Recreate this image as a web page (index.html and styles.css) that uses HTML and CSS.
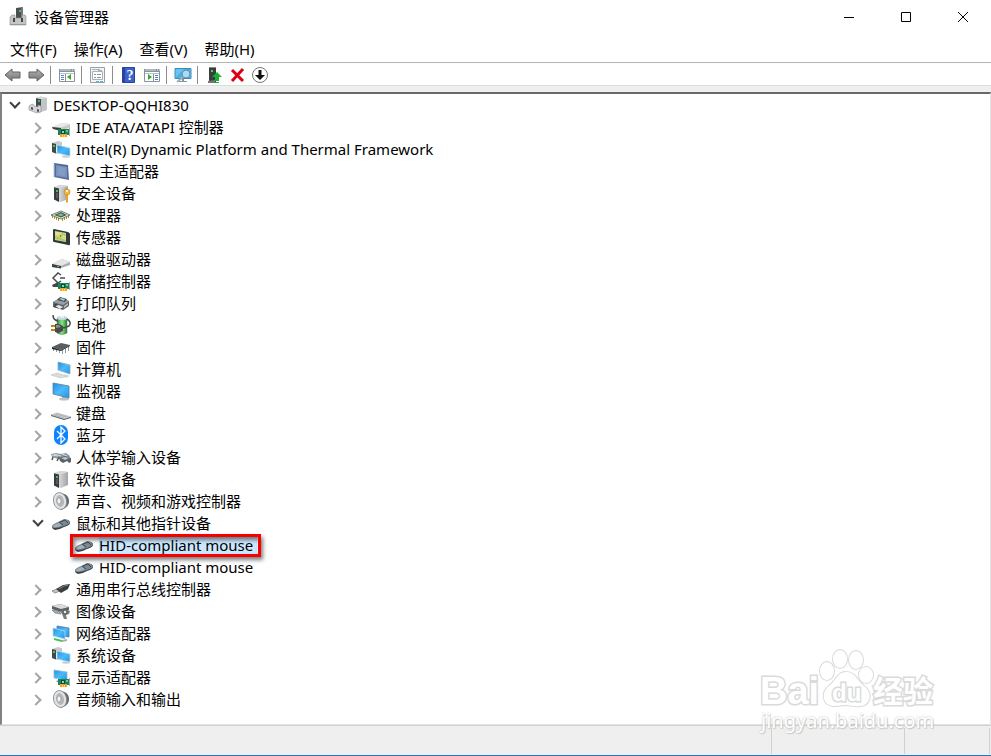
FILE: index.html
```
<!DOCTYPE html>
<html lang="zh-CN">
<head>
  <meta charset="UTF-8">
  <meta name="viewport" content="width=device-width, initial-scale=1">
  <title>设备管理器</title>
  <link rel="stylesheet" href="styles.css">
</head>
<body>

  <!-- icon set -->
  <svg class="sprite" aria-hidden="true">
    <defs>
      <linearGradient id="screen" x1="0" y1="0" x2="1" y2="1">
        <stop offset="0" stop-color="#1e90e6"/><stop offset=".5" stop-color="#4cbafa"/><stop offset="1" stop-color="#2196ec"/>
      </linearGradient>
      <linearGradient id="metal" x1="0" y1="0" x2="1" y2="0">
        <stop offset="0" stop-color="#f4f4f4"/><stop offset="1" stop-color="#a2a4a6"/>
      </linearGradient>
      <linearGradient id="arrow" x1="0" y1="0" x2="0" y2="1">
        <stop offset="0" stop-color="#b4b4b4"/><stop offset="1" stop-color="#747474"/>
      </linearGradient>
      <linearGradient id="green" x1="0" y1="0" x2="1" y2="0">
        <stop offset="0" stop-color="#2c8c3a"/><stop offset=".5" stop-color="#8be58c"/><stop offset="1" stop-color="#1f7f2e"/>
      </linearGradient>
    </defs>

    <symbol id="i-app" viewBox="0 0 18 20">
      <path d="M7 1l7-1v12H7z" fill="#4b4f52"/>
      <path d="M12 0l2 0v12h-2z" fill="#777"/>
      <path d="M10 3h2v2h-2z" fill="#3fcb4e"/>
      <path d="M1 10l2-2h3v3h7V8h3l1 2v8H1z" fill="#c3c5c7" stroke="#8d9092" stroke-width=".6"/>
      <path d="M4 11h2v4H4zM12 11h2v4h-2z" fill="#44484b"/>
      <path d="M1 17h16v1H1z" fill="#999"/>
    </symbol>
    <symbol id="i-root" viewBox="0 0 20 20">
      <path d="M8 3l5-1.500L19 3v12l-6 2-5-2z" fill="#c2c5c7"/>
      <path d="M8 3l5 1v13l-5-2z" fill="#45494c"/>
      <path d="M8 3l5-1.500L19 3l-6 1z" fill="#dcdcdc"/>
      <path d="M10 5h2v2h-2z" fill="#38c348"/>
      <path d="M1 11l3-2 2 1v1l4 1V10l3 1v6l-4 1-8-3z" fill="#d3d5d7" stroke="#898c8e" stroke-width=".6"/>
      <path d="M3 12l2 .500V15l-2-.500zM9 14l2 .500V17l-2-.500z" fill="#505356"/>
    </symbol>
    <symbol id="i-card" viewBox="0 0 20 20">
      <path d="M7 12h11v6H7z" fill="#18845a"/>
      <path d="M10 13h4v4h-4z" fill="#0b4e36"/><path d="M11 14h2v2h-2z" fill="#8fd0ac"/>
      <path d="M15 13h2v2h-2z" fill="#6cc396"/>
      <path d="M9 17h7v3H9z" fill="#f0a31c"/><path d="M11.500 18v2M13.500 18v2" stroke="#fff" stroke-width=".5"/>
      <path d="M18 11h1v8h-1z" fill="#a7abad"/>
    </symbol>
    <symbol id="i-ide" viewBox="0 0 20 20">
      <path d="M1 10l10-4 8 1v4l-9 2z" fill="#c8cacb"/>
      <path d="M1 10l10-4 8 1-9 3.500z" fill="#e9e9e9"/>
      <path d="M1 10l9 1v3L2 12z" fill="#3c4042"/>
      <use href="#i-card" width="20" height="20"/>
    </symbol>
    <symbol id="i-system" viewBox="0 0 20 20">
      <path d="M1 4l6-2 4 1v10l-5 2-5-2z" fill="#c8cacc"/>
      <path d="M1 4l4 1v9.500L1 13z" fill="#44484b"/><path d="M2 6h2v2H2z" fill="#42c94e"/>
      <path d="M5 8h1v5H5z" fill="#fff"/>
      <path d="M6 6l13 3v8L6 14z" fill="url(#screen)" stroke="#bed8e8" stroke-width=".8"/>
      <ellipse cx="15" cy="17.500" rx="4" ry="1.200" fill="#c7cdd1"/>
    </symbol>
    <symbol id="i-sd" viewBox="0 0 20 20">
      <path d="M3 2l14 2 1 15-15-3z" fill="#526c98"/>
      <path d="M5 4l11 2v11L5 15z" fill="#7892bb"/>
      <path d="M7 6l7 1v8l-7-1z" fill="#829cc4"/>
      <path d="M3 3v13" stroke="#b8c7dd"/>
    </symbol>
    <symbol id="i-tower" viewBox="0 0 20 20">
      <path d="M3 4l6-2 8 1v13l-7 3-7-3z" fill="url(#metal)"/>
      <path d="M3 4l5 1.500V19l-5-2.500z" fill="#393c3e"/>
      <path d="M3 4l6-2 8 1-8 2.500z" fill="#d7d8d9"/>
      <path d="M5 7h2v2H5z" fill="#3fc451"/><path d="M5 10h2v5H5z" fill="#555a5d"/>
    </symbol>
    <symbol id="i-security" viewBox="0 0 20 20">
      <use href="#i-tower" width="20" height="20"/>
      <path d="M15 11h2v8l-1 1-1-1z" fill="#e5a52c"/>
      <circle cx="16" cy="9" r="3" fill="#f2b948" stroke="#c98618" stroke-width=".7"/>
      <circle cx="16" cy="8" r="1" fill="#fff"/>
    </symbol>
    <symbol id="i-cpu" viewBox="0 0 20 20">
      <path d="M1.500 10v3M3.500 11v3M5.500 12v3M7.500 13v3M11.500 13v3M13.500 12v3M15.500 11v3M17.500 10v3" stroke="#c58b1e"/>
      <path d="M0 10l10-4 9 4-9 4z" fill="#eef2ee" stroke="#4e5f52" stroke-width=".8"/>
      <path d="M3 10l7-3 6 3-6 2.500z" fill="#35684b"/>
      <path d="M6 10l4-1.500 3 1.500-3 1z" fill="#9cb8a4"/>
    </symbol>
    <symbol id="i-sensor" viewBox="0 0 20 20">
      <path d="M2 3q0-1 1-1l14 3q2 1 2 2v10q0 2-2 1L3 15q-1 0-1-1z" fill="#34383a"/>
      <path d="M4 4l11 2v9L4 13z" fill="#d5e69a"/>
      <path d="M4 9l4 1 3-4 4 1v2l-3-1-2 3 5 2v2L4 12z" fill="#9fce78"/>
      <path d="M4 8l11 3M9 5l-1 8" stroke="#f0c84c"/><path d="M9 8h1v2H9z" fill="#e25c35"/>
    </symbol>
    <symbol id="i-disk" viewBox="0 0 20 20">
      <path d="M1 15l10-5 8 3v3l-9 3-9-1z" fill="#aaadaf"/>
      <path d="M1 15l10-5 8 3-9 4z" fill="#e6e6e7"/>
      <path d="M1 15l9 2v2.500L1 18z" fill="#3b4042"/><path d="M6 17h2v1H6z" fill="#3bdb51"/>
    </symbol>
    <symbol id="i-storage" viewBox="0 0 20 20">
      <path d="M10 4L7 2 2 7l5 5 3-2M9 7h5" fill="none" stroke="#484d50" stroke-width="1.500"/>
      <path d="M1 14l6-3 3 3-2 2-6 0z" fill="#42484b"/>
      <use href="#i-card" width="20" height="20"/>
    </symbol>
    <symbol id="i-printer" viewBox="0 0 20 20">
      <path d="M2 9l7-4 9 3v5l-6 4-10-3z" fill="#606669"/>
      <path d="M2 9l7-4 9 3-6 4z" fill="#999fa2"/>
      <path d="M6 7l3-3 7 2-2 3z" fill="#44494d"/><path d="M8 6l2-1 4 1-1 2z" fill="#9fc8dd"/>
      <path d="M4 11l7 2v3l-8-2z" fill="#303436"/><path d="M4 13l4-1 4 2-3 2z" fill="#e3e5e6"/>
      <path d="M13 13l4-3v2l-4 3z" fill="#b8bcbe"/>
    </symbol>
    <symbol id="i-battery" viewBox="0 0 20 20">
      <path d="M6 3q5-3 10 0v15q-5 3-10 0z" fill="url(#green)" stroke="#507151" stroke-width=".5"/>
      <ellipse cx="11" cy="3" rx="5" ry="2" fill="#c5d6df"/><path d="M9 1h4v2H9z" fill="#e8edef"/>
      <path d="M2 0q0 5 5 6M16 4q5 3 2 7-4 2-7 2" fill="none" stroke="#454b4e" stroke-width="1.500"/>
      <path d="M0 10h5v2H0zM0 14h5v2H0z" fill="#bb8412"/>
      <path d="M4 9h4l4 2v5l-5 2-3-1z" fill="#484a4b"/><path d="M5 10h3l2 2-5 1z" fill="#8c8f91"/>
    </symbol>
    <symbol id="i-firmware" viewBox="0 0 20 20">
      <path d="M2.500 12v2M5.500 13v2M8.500 13v3M11.500 12v5M14.500 11v5M17.500 9v5" stroke="#93999c"/>
      <path d="M1 10l9-4 9 2-9 5z" fill="#5a5e60"/>
      <path d="M1 10l9 3v1l-9-2zM10 13l9-5v1l-9 5z" fill="#25282a"/>
    </symbol>
    <symbol id="i-computer" viewBox="0 0 20 20">
      <path d="M7 3l12 3v9L7 11z" fill="url(#screen)" stroke="#8fa9b8" stroke-width=".8"/>
      <ellipse cx="14" cy="17" rx="4" ry="1.500" fill="#d0d6d9"/>
      <path d="M0 16l6-2 9 3-5 2z" fill="#e4e7e9" stroke="#b9bec1" stroke-width=".6"/>
      <path d="M3 16l7 2M5 15l7 2" stroke="#c5cacd" stroke-width=".6"/>
    </symbol>
    <symbol id="i-monitor" viewBox="0 0 20 20">
      <path d="M11 14l4 1v3h-4z" fill="#9ca3a7"/><ellipse cx="13" cy="18" rx="5" ry="1.500" fill="#bcc2c6"/>
      <path d="M2 2l16 3v12L2 13z" fill="url(#screen)" stroke="#5c7f94" stroke-width=".8"/>
    </symbol>
    <symbol id="i-keyboard" viewBox="0 0 20 20">
      <path d="M0 12l6-2 14 4-7 2z" fill="#d2d5d7" stroke="#a3a8ab" stroke-width=".6"/>
      <path d="M0 12l13 4 7-2v1l-7 2L0 13z" fill="#5c6265"/>
      <path d="M3 12l10 3M5 11l11 3" stroke="#9ba1a5" stroke-width=".7"/>
    </symbol>
    <symbol id="i-bluetooth" viewBox="0 0 20 20">
      <rect x="3" y="0" width="14" height="20" rx="7" fill="#0a84ff"/>
      <path d="M6 6l8 8-4 4V2l4 4-8 8" fill="none" stroke="#fff" stroke-width="1.300"/>
    </symbol>
    <symbol id="i-hid" viewBox="0 0 20 20">
      <path d="M0 7l5-1 5 1 5-1 4 3-1 2-5-1-6 2-6-2z" fill="#8d979b"/>
      <path d="M1 8l6 1M3 7l7 2M11 7l5 2" stroke="#d6dcdf"/>
      <path d="M2 10l-1 3M8 10l-2 4" stroke="#525b60" stroke-width="1.500"/>
      <path d="M8 11l6-2 6 2v4l-2 1-2-2-4 2-3-2z" fill="#59636a"/>
      <path d="M10 11l4-1 4 1-4 2z" fill="#bdc7cc"/>
    </symbol>
    <symbol id="i-speaker" viewBox="0 0 20 20">
      <path d="M8 2q9 0 10 7t-8 10" fill="#66696b"/>
      <ellipse cx="9" cy="10" rx="6.500" ry="8.500" transform="rotate(-12 9 10)" fill="#e3e4e5" stroke="#85898b" stroke-width=".8"/>
      <ellipse cx="9" cy="10" rx="4" ry="6" transform="rotate(-12 9 10)" fill="#b6b9bb"/>
      <ellipse cx="8" cy="10" rx="2" ry="3" fill="#f4f4f4" stroke="#84888a" stroke-width=".6"/>
    </symbol>
    <symbol id="i-mouse" viewBox="0 0 20 20">
      <path d="M1 14q0-2 6-4l6-3q5-1 6 2 1 3-6 5-5 3-9 3-3-1-3-3z" fill="#39444c"/>
      <path d="M1 13q1-2 6-4l6-3q4 0 6 3 0 2-6 4-5 2-9 2-3 0-3-2z" fill="#7b8892"/>
      <path d="M2 13q2-2 6-3l3 2q-4 3-8 2z" fill="#a3b0b9"/>
      <path d="M8 9l4 3M9 9l5-2 3 3" stroke="#2c363e" stroke-width=".8" fill="none"/>
    </symbol>
    <symbol id="i-usb" viewBox="0 0 20 20">
      <path d="M1 12l5-2 3 2-5 2z" fill="#c4c8ca" stroke="#6f7476" stroke-width=".7"/>
      <path d="M5 10l7-4 7-1-2 5-7 4z" fill="#3b3d3f"/><path d="M8 10l5-3 4-1" stroke="#828688" fill="none"/>
    </symbol>
    <symbol id="i-imaging" viewBox="0 0 20 20">
      <path d="M1 5l8-2 9 3v3l-8 2-9-3z" fill="#5c6062"/>
      <path d="M1 5l8-2 9 3-8 2z" fill="#d8dadb"/>
      <path d="M1 9l7 1 2 3-6-1z" fill="#a9adaf" stroke="#64696b" stroke-width=".6"/>
      <path d="M9 10l5-2 5 2-1 3-3 1 1 4h-3l-2-5z" fill="#777c7f"/><circle cx="14" cy="11" r="2" fill="#eceded" stroke="#3f4446"/>
    </symbol>
    <symbol id="i-network" viewBox="0 0 20 20">
      <path d="M6 3l12 2v9l-12-2z" fill="url(#screen)" stroke="#4c7c98" stroke-width=".8"/>
      <path d="M2 5l12 3v8L2 13z" fill="url(#screen)" stroke="#b9d8ea" stroke-width=".8"/>
      <path d="M3 15l8 2v2l-8-2z" fill="#41c64a"/><path d="M11 17l5-1v2l-5 1z" fill="#a9afb1"/>
    </symbol>
    <symbol id="i-display" viewBox="0 0 20 20">
      <path d="M3 3l13 2v8L3 11z" fill="url(#screen)" stroke="#93b7cb" stroke-width=".8"/>
      <path d="M5 14l4-1v3z" fill="#62686b"/>
      <use href="#i-card" width="20" height="20"/>
    </symbol>

    <symbol id="t-arrow" viewBox="0 0 18 18">
      <path d="M1 9l7-6v3h8v6H8v3z" fill="url(#arrow)" stroke="#626262"/>
    </symbol>
    <symbol id="t-window" viewBox="0 0 18 18">
      <path d="M1.500 3.500h15v12h-15z" fill="#fff" stroke="#8993a0"/>
      <path d="M1 3h16v3H1z" fill="#8993a0"/><path d="M2 4h11" stroke="#d6dbe1"/><path d="M14 4h1M16 4h1" stroke="#fff"/>
      <path d="M2 7.500h14" stroke="#b9c0c8"/>
    </symbol>
  </svg>

  <header class="titlebar">
    <svg class="app-icon" aria-hidden="true"><use href="#i-app"/></svg>
    <h1>设备管理器</h1>
    <div class="window-buttons">
      <button type="button" aria-label="最小化"><svg viewBox="0 0 12 12"><path d="M1 6.500h10"/></svg></button>
      <button type="button" aria-label="最大化"><svg viewBox="0 0 12 12"><path d="M1.500 1.500h9v9h-9z"/></svg></button>
      <button type="button" aria-label="关闭"><svg viewBox="0 0 12 12"><path d="M1 1l10 10M11 1L1 11"/></svg></button>
    </div>
  </header>

  <nav class="menubar">
    <button type="button">文件(F)</button>
    <button type="button">操作(A)</button>
    <button type="button">查看(V)</button>
    <button type="button">帮助(H)</button>
  </nav>

  <div class="toolbar">
    <button type="button" aria-label="后退"><svg><use href="#t-arrow"/></svg></button>
    <button type="button" aria-label="前进" class="flip"><svg><use href="#t-arrow"/></svg></button>
    <span class="sep"></span>
    <button type="button" aria-label="显示/隐藏控制台树">
      <svg viewBox="0 0 18 18"><use href="#t-window"/><path d="M7.500 8v7" stroke="#8993a0"/><path d="M3 9.500h3M3 11.500h3M3 13.500h3" stroke="#4c84c4"/><path d="M13 8v6l-4-3z" fill="#3ba82d"/></svg>
    </button>
    <span class="sep"></span>
    <button type="button" aria-label="属性">
      <svg viewBox="0 0 18 18"><path d="M1.500 1.500h14v15h-14z" fill="#f5f5f5" stroke="#9a9fa5"/><path d="M3.500 5.500h10v8h-10z" fill="#fff" stroke="#a9b0b8"/><path d="M3 3.500h8" stroke="#a9b0b8"/><path d="M9 4h4v2H9z" fill="#a9b0b8"/><path d="M5 8.500h2M8 8.500h4M5 11.500h2M8 11.500h4" stroke="#8793a0"/><path d="M7 15.500h3M11 15.500h3" stroke="#55b4dc"/></svg>
    </button>
    <span class="sep"></span>
    <button type="button" aria-label="帮助">
      <svg viewBox="0 0 18 18"><path d="M2.500 1.500h12v15h-12z" fill="#3c62cb" stroke="#27439a"/><path d="M3 2h2v14H3z" fill="#2a4597"/><text x="10" y="14" text-anchor="middle" class="help-mark">?</text></svg>
    </button>
    <button type="button" aria-label="操作窗格">
      <svg viewBox="0 0 18 18"><use href="#t-window"/><path d="M10.500 8v7" stroke="#8993a0"/><path d="M12 9.500h3M12 11.500h3M12 13.500h3" stroke="#4c84c4"/><path d="M5 8v6l4-3z" fill="#3ba82d"/></svg>
    </button>
    <span class="sep"></span>
    <button type="button" aria-label="扫描检测硬件改动">
      <svg viewBox="0 0 18 18"><path d="M1 2.500h16v10H1z" fill="#65c4f4" stroke="#4289b4"/><path d="M1 12l9-9h7v9z" fill="#49afe8"/><path d="M5 16h8v-1h-3v-2H8v2H5z" fill="#8296a3"/><circle cx="12" cy="8" r="4" fill="#a5dcf8" stroke="#70899a"/><path d="M9 11l-6 5" stroke="#a3adb2" stroke-width="2"/></svg>
    </button>
    <span class="sep"></span>
    <button type="button" aria-label="更新驱动程序">
      <svg viewBox="0 0 18 18"><path d="M4 1h7v15H4z" fill="#3a3e40"/><path d="M4 1h7v1H4z" fill="#888"/><path d="M6 4h2v2H6z" fill="#46d758"/><path d="M3 15l7-1v3H3z" fill="#777"/><path d="M12 6l5 5h-3v2h-4v-2H7zM10 13h4v2h-4zM10 16h4v1h-4z" fill="#12b52d"/></svg>
    </button>
    <button type="button" aria-label="卸载设备">
      <svg viewBox="0 0 18 18"><path d="M4 4l11 11M15 3L4 15" fill="none" stroke="#dc0012" stroke-width="3"/></svg>
    </button>
    <button type="button" aria-label="禁用设备">
      <svg viewBox="0 0 18 18"><circle cx="9" cy="9" r="7.500" fill="#fff" stroke="#777"/><path d="M7.500 4h3v5H14l-5 5-5-5h3.500z" fill="#111"/></svg>
    </button>
  </div>

  <main class="tree-pane">
    <ul class="tree">
      <li>
        <div class="row open"><button class="twisty" type="button" aria-label="折叠"></button><svg class="icon"><use href="#i-root"/></svg><span class="label">DESKTOP-QQHI830</span></div>
        <ul>
          <li class="row"><button class="twisty" type="button" aria-label="展开"></button><svg class="icon"><use href="#i-ide"/></svg><span class="label">IDE ATA/ATAPI 控制器</span></li>
          <li class="row"><button class="twisty" type="button" aria-label="展开"></button><svg class="icon"><use href="#i-system"/></svg><span class="label">Intel(R) Dynamic Platform and Thermal Framework</span></li>
          <li class="row"><button class="twisty" type="button" aria-label="展开"></button><svg class="icon"><use href="#i-sd"/></svg><span class="label">SD 主适配器</span></li>
          <li class="row"><button class="twisty" type="button" aria-label="展开"></button><svg class="icon"><use href="#i-security"/></svg><span class="label">安全设备</span></li>
          <li class="row"><button class="twisty" type="button" aria-label="展开"></button><svg class="icon"><use href="#i-cpu"/></svg><span class="label">处理器</span></li>
          <li class="row"><button class="twisty" type="button" aria-label="展开"></button><svg class="icon"><use href="#i-sensor"/></svg><span class="label">传感器</span></li>
          <li class="row"><button class="twisty" type="button" aria-label="展开"></button><svg class="icon"><use href="#i-disk"/></svg><span class="label">磁盘驱动器</span></li>
          <li class="row"><button class="twisty" type="button" aria-label="展开"></button><svg class="icon"><use href="#i-storage"/></svg><span class="label">存储控制器</span></li>
          <li class="row"><button class="twisty" type="button" aria-label="展开"></button><svg class="icon"><use href="#i-printer"/></svg><span class="label">打印队列</span></li>
          <li class="row"><button class="twisty" type="button" aria-label="展开"></button><svg class="icon"><use href="#i-battery"/></svg><span class="label">电池</span></li>
          <li class="row"><button class="twisty" type="button" aria-label="展开"></button><svg class="icon"><use href="#i-firmware"/></svg><span class="label">固件</span></li>
          <li class="row"><button class="twisty" type="button" aria-label="展开"></button><svg class="icon"><use href="#i-computer"/></svg><span class="label">计算机</span></li>
          <li class="row"><button class="twisty" type="button" aria-label="展开"></button><svg class="icon"><use href="#i-monitor"/></svg><span class="label">监视器</span></li>
          <li class="row"><button class="twisty" type="button" aria-label="展开"></button><svg class="icon"><use href="#i-keyboard"/></svg><span class="label">键盘</span></li>
          <li class="row"><button class="twisty" type="button" aria-label="展开"></button><svg class="icon"><use href="#i-bluetooth"/></svg><span class="label">蓝牙</span></li>
          <li class="row"><button class="twisty" type="button" aria-label="展开"></button><svg class="icon"><use href="#i-hid"/></svg><span class="label">人体学输入设备</span></li>
          <li class="row"><button class="twisty" type="button" aria-label="展开"></button><svg class="icon"><use href="#i-tower"/></svg><span class="label">软件设备</span></li>
          <li class="row"><button class="twisty" type="button" aria-label="展开"></button><svg class="icon"><use href="#i-speaker"/></svg><span class="label">声音、视频和游戏控制器</span></li>
          <li>
            <div class="row open"><button class="twisty" type="button" aria-label="折叠"></button><svg class="icon"><use href="#i-mouse"/></svg><span class="label">鼠标和其他指针设备</span></div>
            <ul>
              <li class="row leaf selected"><span class="marked"><svg class="icon"><use href="#i-mouse"/></svg><span class="label">HID-compliant mouse</span></span></li>
              <li class="row leaf"><svg class="icon"><use href="#i-mouse"/></svg><span class="label">HID-compliant mouse</span></li>
            </ul>
          </li>
          <li class="row"><button class="twisty" type="button" aria-label="展开"></button><svg class="icon"><use href="#i-usb"/></svg><span class="label">通用串行总线控制器</span></li>
          <li class="row"><button class="twisty" type="button" aria-label="展开"></button><svg class="icon"><use href="#i-imaging"/></svg><span class="label">图像设备</span></li>
          <li class="row"><button class="twisty" type="button" aria-label="展开"></button><svg class="icon"><use href="#i-network"/></svg><span class="label">网络适配器</span></li>
          <li class="row"><button class="twisty" type="button" aria-label="展开"></button><svg class="icon"><use href="#i-system"/></svg><span class="label">系统设备</span></li>
          <li class="row"><button class="twisty" type="button" aria-label="展开"></button><svg class="icon"><use href="#i-display"/></svg><span class="label">显示适配器</span></li>
          <li class="row"><button class="twisty" type="button" aria-label="展开"></button><svg class="icon"><use href="#i-speaker"/></svg><span class="label">音频输入和输出</span></li>
        </ul>
      </li>
    </ul>
  </main>

  <footer class="statusbar">
    <span class="cell"></span>
    <span class="cell mid"></span>
    <span class="cell end"></span>
  </footer>

  <div class="watermark">
    <svg viewBox="0 0 184 60">
      <g class="wm-shape">
        <ellipse cx="69" cy="23" rx="7" ry="9"/>
        <ellipse cx="82" cy="11" rx="7" ry="9"/>
        <ellipse cx="98" cy="12" rx="7" ry="9"/>
        <ellipse cx="108" cy="27" rx="7" ry="8"/>
        <path d="M88 24c-9 0-10 9-17 14-8 6-7 19 4 20 6 0 8-1 13-1s8 2 14 1c11-1 13-13 4-20-7-6-9-14-18-14z"/>
      </g>
      <text x="2" y="56" class="wm-brand">Bai</text>
      <text x="74" y="53" class="wm-du">du</text>
      <text x="115" y="54" class="wm-cjk">经验</text>
    </svg>
    <span class="wm-url">jingyan.baidu.com</span>
  </div>

  <script>
    // collapse / expand a branch
    document.querySelectorAll(".row.open .twisty").forEach(function (btn) {
      btn.addEventListener("click", function () {
        const row = btn.parentElement;
        row.classList.toggle("open");
        row.nextElementSibling.hidden = !row.classList.contains("open");
      });
    });
  </script>
</body>
</html>
```

FILE: styles.css
```
* {
  box-sizing: border-box;
}
body {
  margin: 0;
  min-height: 100vh;
  display: flex;
  flex-direction: column;
  position: relative;
  background: #fff;
  color: #000;
  font: 15px/22px "Noto Sans", "Noto Sans CJK SC", sans-serif;
  border-bottom: 1px solid #1f78c0;
}
button {
  padding: 0;
  border: none;
  background: none;
  color: inherit;
  font: inherit;
}
ul {
  list-style: none;
  margin: 0;
  padding: 0;
}
.sprite {
  position: absolute;
  width: 0;
  height: 0;
}

/* title bar */
.titlebar {
  display: flex;
  align-items: center;
  height: 36px;
  padding: 0 0 2px 9px;
}
.app-icon {
  width: 18px;
  height: 20px;
}
.titlebar h1 {
  margin: 0 0 0 7px;
  font-size: 15px;
  font-weight: normal;
}
.window-buttons {
  display: flex;
  margin-left: auto;
}
.window-buttons button {
  display: flex;
  align-items: center;
  justify-content: center;
  width: 57px;
  height: 34px;
}
.window-buttons svg {
  width: 12px;
  height: 12px;
  fill: none;
  stroke: #000;
}

/* menu + toolbar */
.menubar {
  display: flex;
  gap: 17px;
  height: 27px;
  padding: 0 10px;
  border-bottom: 1px solid #b4b4b4;
}
.toolbar {
  display: flex;
  align-items: center;
  height: 23px;
  padding: 2px 0 0 1px;
  border-bottom: 1px solid #dcdcdc;
}
.toolbar button {
  display: flex;
  justify-content: center;
  width: 23px;
}
.toolbar svg {
  width: 18px;
  height: 18px;
}
.toolbar .flip svg {
  transform: scaleX(-1);
}
.toolbar .sep {
  width: 5px;
  height: 18px;
  margin-left: 3px;
  border-left: 1px solid #8c8c8c;
}
.help-mark {
  font: bold 14px "Liberation Serif", serif;
  fill: #fff;
}

/* device tree */
.tree-pane {
  flex: 1;
  margin-top: 6px;
  border: 2px solid #696969;
  border-left-color: #828282;
  border-right: 1px solid #e3e3e3;
  border-bottom: 1px solid #e3e3e3;
  box-shadow: 0 -6px 0 #efefef;
}
.tree ul {
  padding-left: 23px;
}
.row {
  display: flex;
  align-items: center;
  height: 22px;
}
.icon {
  flex: none;
  width: 20px;
  height: 20px;
}
.label {
  margin-left: 5px;
  white-space: nowrap;
}
.twisty {
  display: flex;
  align-items: center;
  justify-content: center;
  width: 26px;
  height: 22px;
}
.twisty::before {
  content: "";
  width: 6px;
  height: 6px;
  margin: 2px 4px 0 0;
  border: solid #a6a6a6;
  border-width: 2px 2px 0 0;
  transform: rotate(45deg);
}
.open > .twisty::before {
  margin: 0 0 4px;
  border-color: #404040;
  transform: rotate(135deg);
}
.leaf {
  padding-left: 26px;
}
.marked {
  position: relative;
  display: flex;
  align-items: center;
}
.selected .label {
  padding-right: 4px;
  background: #cce8ff;
}
.marked::after {
  content: "";
  position: absolute;
  inset: 0 -4px -1px;
  border: 3px solid #f80000;
  box-shadow: 2px 3px 4px rgba(0, 0, 0, 0.5), inset 2px 3px 4px rgba(0, 0, 0, 0.5);
}

/* status bar */
.statusbar {
  display: flex;
  height: 30px;
  padding: 2px 1px 1px 0;
  background: #efefef;
  border-top: 1px solid #d0d0d0;
}
.cell {
  flex: 1;
  border-right: 1px solid #d0d0d0;
}
.cell.mid {
  flex: 0 0 133px;
}
.cell.end {
  flex: 0 0 85px;
}

.watermark {
  position: absolute;
  right: 49px;
  bottom: 21px;
  width: 184px;
  pointer-events: none;
}
.watermark svg {
  display: block;
  height: 60px;
  overflow: visible;
  fill: #fff;
  stroke: #dadada;
  paint-order: stroke;
}
.wm-shape {
  stroke-width: 2px;
}
.wm-brand {
  font: bold 38px "Liberation Sans", sans-serif;
  stroke-width: 3px;
}
.wm-du {
  font: bold 24px "Liberation Sans", sans-serif;
  stroke-width: 3px;
}
.wm-cjk {
  font: bold 30px "Noto Sans CJK SC", sans-serif;
  stroke-width: 3px;
}
.wm-url {
  display: block;
  padding-left: 3px;
  font: 20px/26px "Noto Sans", sans-serif;
  color: #fff;
  text-shadow: 0 0 2px #bbb, 1px 1px 1px #ccc;
}
```
